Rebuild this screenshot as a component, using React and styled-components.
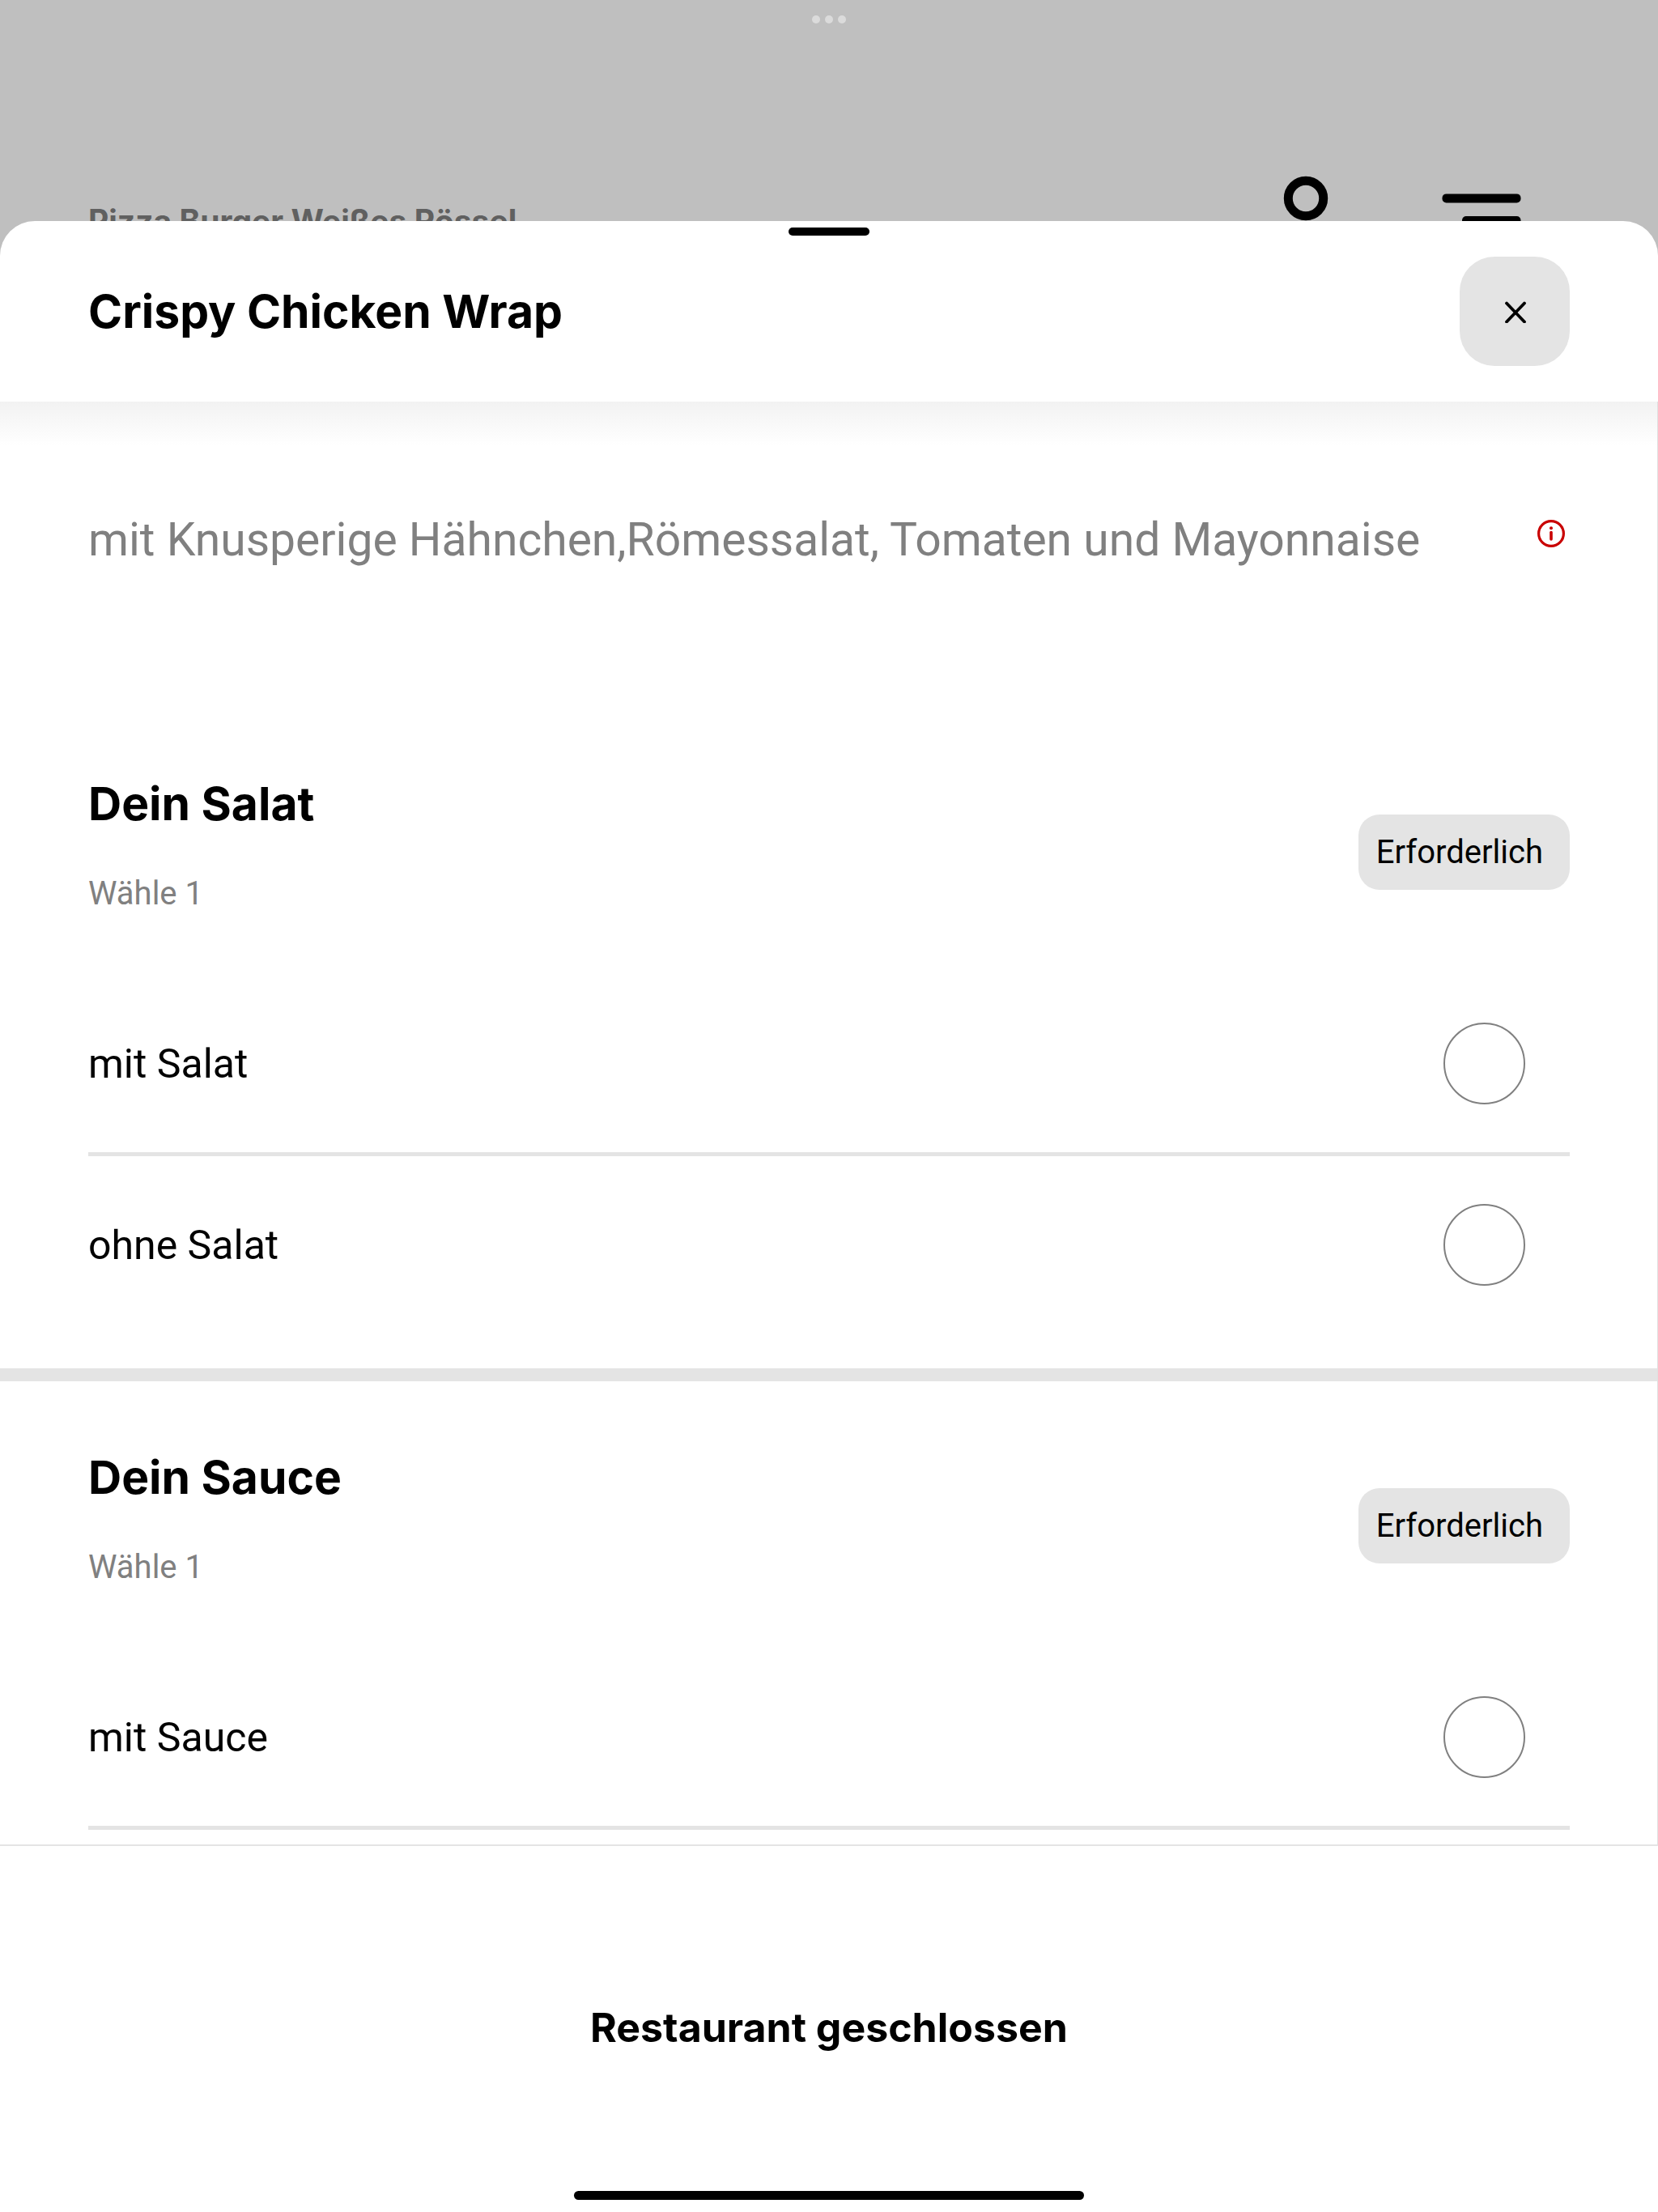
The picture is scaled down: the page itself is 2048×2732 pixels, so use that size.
import React, { useState } from 'react';
import styled, { createGlobalStyle } from 'styled-components'

const optionGroups = [
  {
    id: 'salat',
    title: 'Dein Salat',
    hint: 'Wähle 1',
    options: [
      { name: 'mit Salat', divider: true },
      { name: 'ohne Salat', divider: false },
    ],
  },
  {
    id: 'sauce',
    title: 'Dein Sauce',
    hint: 'Wähle 1',
    options: [
      { name: 'mit Sauce', divider: true },
    ],
  },
]

function App() {
  const [selected, setSelected] = useState({})

  return (
    <>
      <GlobalStyle />
      <Page>
        <Backdrop>
          <Dots>
            <Dot />
            <Dot />
            <Dot />
          </Dots>
          <Nav>
            <RestaurantName>Pizza Burger Weißes Rössel</RestaurantName>
            <NavIcons>
              <UserIcon />
              <MenuIcon />
            </NavIcons>
          </Nav>
        </Backdrop>
        <Sheet role="dialog" aria-labelledby="product-title">
          <Handle />
          <SheetHeader>
            <Title id="product-title">Crispy Chicken Wrap</Title>
            <CloseButton type="button" aria-label="Schließen">
              <CloseIcon />
            </CloseButton>
          </SheetHeader>
          <Content>
            <Description>
              <DescriptionText>
                mit Knusperige Hähnchen,Römessalat, Tomaten und Mayonnaise
              </DescriptionText>
              <InfoButton type="button" aria-label="Produktinfo">
                <InfoIcon />
              </InfoButton>
            </Description>
            {optionGroups.map(group => (
              <Group key={group.id} role="radiogroup" aria-labelledby={group.id}>
                <GroupHeader>
                  <GroupHeading>
                    <GroupTitle id={group.id}>{group.title}</GroupTitle>
                    <Hint>{group.hint}</Hint>
                  </GroupHeading>
                  <Badge>Erforderlich</Badge>
                </GroupHeader>
                {group.options.map(({ name, divider }) => (
                  <Option key={name} $divider={divider}>
                    {name}
                    <Radio
                      type="radio"
                      name={group.id}
                      value={name}
                      checked={selected[group.id] === name}
                      onChange={() => setSelected({ ...selected, [group.id]: name })} />
                  </Option>
                ))}
              </Group>
            ))}
          </Content>
          <Footer>
            <OrderButton type="button">Restaurant geschlossen</OrderButton>
            <HomeIndicator />
          </Footer>
        </Sheet>
      </Page>
    </>
  );
}

const UserIcon = () => (
  <svg width="98" height="98" viewBox="0 0 98 98" fill="none" stroke="#000" strokeWidth="11">
    <circle cx="49" cy="28" r="21.7" />
    <path d="M10 98a39 34 0 0 1 78 0" />
  </svg>
)

const MenuIcon = () => (
  <svg width="98" height="98" viewBox="0 0 98 98" fill="#000">
    <rect x="0.5" y="22.4" width="97" height="11" rx="5" />
    <rect x="25" y="50" width="72.5" height="11" rx="5" />
    <rect x="0.5" y="78" width="97" height="11" rx="5" />
  </svg>
)

const CloseIcon = () => (
  <svg width="28" height="28" viewBox="0 0 28 28" stroke="#000" strokeWidth="3.8" strokeLinecap="round">
    <path d="M4 3.5l22 23M26 3.5l-22 23" />
  </svg>
)

const InfoIcon = () => (
  <svg width="34" height="34" viewBox="0 0 34 34" fill="none" stroke="#c90000">
    <circle cx="17" cy="17" r="15.4" strokeWidth="3.2" />
    <path d="M17 15.5v8.5" strokeWidth="3.6" strokeLinecap="round" />
    <circle cx="17" cy="10.3" r="2" fill="#c90000" stroke="none" />
  </svg>
)

const GlobalStyle = createGlobalStyle`
  * {
    box-sizing: border-box;
  }

  body {
    margin: 0;
    background: #bfbfbf;
    color: #000;
    font-family: Roboto, "Liberation Sans", sans-serif;
  }

  h1, h2, p {
    margin: 0;
  }

  button {
    border: none;
    padding: 0;
    color: inherit;
    font-family: inherit;
  }
`

const Page = styled.div`
  display: flex;
  flex-direction: column;
  height: 100vh;
`

const Backdrop = styled.div`
  flex: none;
  height: 273px;
  padding-top: 19px;
  overflow: hidden;
`

const Dots = styled.div`
  display: flex;
  justify-content: center;
  gap: 6px;
`

const Dot = styled.span`
  width: 10px;
  height: 10px;
  border-radius: 50%;
  background: #dbdbdb;
`

const Nav = styled.div`
  display: flex;
  justify-content: space-between;
  align-items: center;
  margin-top: 188px;
  padding: 0 169px 0 109px;
`

const RestaurantName = styled.p`
  padding-top: 14px;
  color: #606060;
  font-family: Inter, sans-serif;
  font-size: 39px;
  font-weight: 700;
  line-height: 60px;
`

const NavIcons = styled.div`
  display: flex;
  gap: 119px;
`

const Sheet = styled.main`
  display: flex;
  flex: 1;
  flex-direction: column;
  position: relative;
  min-height: 0;
  border-radius: 43px 43px 0 0;
  background: #fff;
`

const Handle = styled.span`
  position: absolute;
  top: 8px;
  left: 0;
  right: 0;
  width: 100px;
  height: 10px;
  margin: auto;
  border-radius: 5px;
  background: #000;
`

const SheetHeader = styled.header`
  display: flex;
  justify-content: space-between;
  align-items: center;
  padding: 44px 109px;
`

const Title = styled.h1`
  font-family: Inter, sans-serif;
  font-size: 57px;
  font-weight: 700;
  line-height: 72px;
`

const CloseButton = styled.button`
  display: flex;
  justify-content: center;
  align-items: center;
  width: 136px;
  height: 135px;
  border-radius: 43px;
  background: #e4e4e4;
`

const Content = styled.div`
  flex: 1;
  min-height: 0;
  overflow-y: auto;
  scrollbar-width: none;
  border-right: 1px solid #e0e0e0;
  background: linear-gradient(#f2f2f2, #fff 54px);
`

const Description = styled.div`
  display: flex;
  justify-content: space-between;
  align-items: flex-start;
  padding: 128px 108px 164px 109px;
`

const DescriptionText = styled.p`
  color: #808080;
  font-size: 57px;
  line-height: 86px;
`

const InfoButton = styled.button`
  display: flex;
  justify-content: center;
  align-items: center;
  width: 46px;
  height: 70px;
  background: none;
`

const Group = styled.section`
  padding: 83px 108px 43px 109px;

  & + & {
    border-top: 16px solid #e4e4e4;
  }
`

const GroupHeader = styled.div`
  display: flex;
  justify-content: space-between;
  align-items: center;
  margin-bottom: 56px;
`

const GroupHeading = styled.div`
  display: flex;
  flex-direction: column;
  gap: 31px;
`

const GroupTitle = styled.h2`
  font-family: Inter, sans-serif;
  font-size: 57px;
  font-weight: 700;
  line-height: 72px;
`

const Hint = styled.p`
  color: #808080;
  font-size: 40px;
  line-height: 88px;
`

const Badge = styled.span`
  padding: 0 33px 0 22px;
  border-radius: 26px;
  background: #e4e4e4;
  font-size: 40px;
  line-height: 93px;
`

const Option = styled.label`
  display: flex;
  justify-content: space-between;
  align-items: center;
  padding: 59px 55px 59px 0;
  border-bottom: ${props => props.$divider ? '5px solid #e4e4e4' : 'none'};
  font-size: 50px;
  line-height: 84px;
`

const Radio = styled.input`
  appearance: none;
  width: 101px;
  height: 101px;
  margin: 0;
  border: 2px solid #808080;
  border-radius: 50%;

  &:checked {
    border: 30px solid #000;
  }
`

const Footer = styled.footer`
  display: flex;
  flex-direction: column;
  align-items: center;
  padding: 182px 109px 15px;
  border-top: 2px solid #e4e4e4;
`

const OrderButton = styled.button`
  background: none;
  font-family: Inter, sans-serif;
  font-size: 50px;
  font-weight: 700;
  line-height: 84px;
`

const HomeIndicator = styled.span`
  width: 630px;
  max-width: 100%;
  height: 11px;
  margin-top: 160px;
  border-radius: 6px;
  background: #000;
`

export default App;
